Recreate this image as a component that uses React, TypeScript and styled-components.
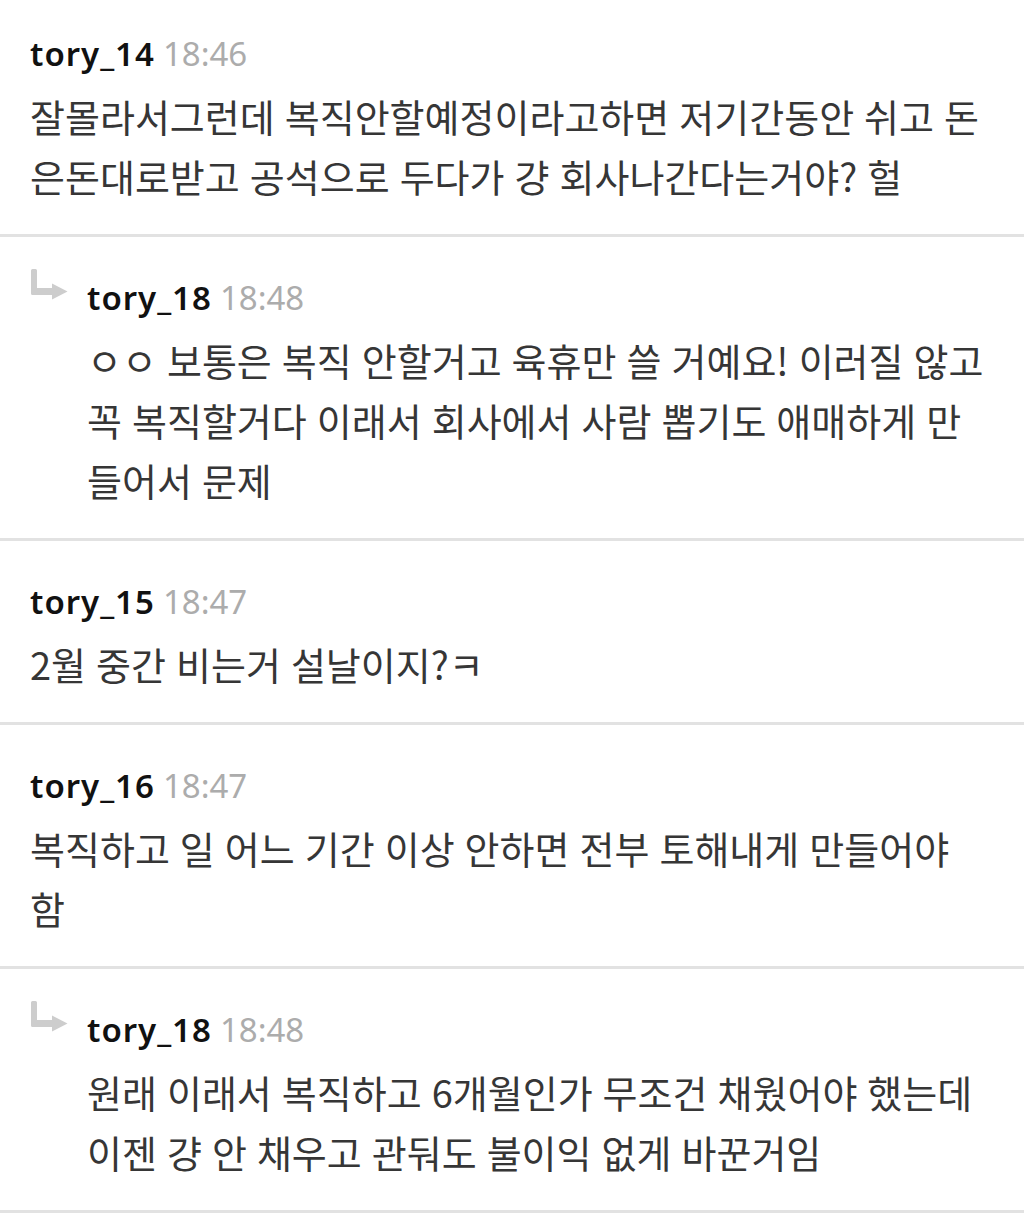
import React from "react";
import styled, { createGlobalStyle } from "styled-components";

const GlobalStyle = createGlobalStyle`
  body {
    margin: 0;
    background: #ffffff;
  }
`;

const List = styled.div`
  display: flex;
  flex-direction: column;
  margin-top: -7px;
`;

const Item = styled.div`
  display: flex;
  padding: 27px 32px 28px 30px;
  border-bottom: 3px solid #e2e2e2;
`;

const ReplyMark = styled.div`
  width: 57px;
  flex-shrink: 0;
  padding-top: 5px;
`;

const Content = styled.div`
  flex: 1;
  min-width: 0;
`;

const Header = styled.div`
  display: flex;
  align-items: center;
  height: 66px;
  font-family: "Noto Sans", "Open Sans", sans-serif;
  font-size: 33px;
`;

const Name = styled.span`
  font-weight: 600;
  color: #111111;
  letter-spacing: 1px;
`;

const Time = styled.span`
  margin-left: 8px;
  font-weight: 400;
  color: #acacac;
`;

const Body = styled.div`
  font-family: "Noto Sans CJK KR", "Noto Sans", sans-serif;
  font-size: 38px;
  line-height: 60px;
  word-spacing: 1.5px;
  color: #363636;
`;

type Comment = {
  user: string;
  time: string;
  text: string;
  reply?: boolean;
};

const comments: Comment[] = [
  {
    user: "tory_14",
    time: "18:46",
    text: "잘몰라서그런데 복직안할예정이라고하면 저기간동안 쉬고 돈은돈대로받고 공석으로 두다가 걍 회사나간다는거야? 헐",
  },
  {
    user: "tory_18",
    time: "18:48",
    text: "ㅇㅇ 보통은 복직 안할거고 육휴만 쓸 거예요! 이러질 않고 꼭 복직할거다 이래서 회사에서 사람 뽑기도 애매하게 만들어서 문제",
    reply: true,
  },
  {
    user: "tory_15",
    time: "18:47",
    text: "2월 중간 비는거 설날이지?ㅋ",
  },
  {
    user: "tory_16",
    time: "18:47",
    text: "복직하고 일 어느 기간 이상 안하면 전부 토해내게 만들어야 함",
  },
  {
    user: "tory_18",
    time: "18:48",
    text: "원래 이래서 복직하고 6개월인가 무조건 채웠어야 했는데 이젠 걍 안 채우고 관둬도 불이익 없게 바꾼거임",
    reply: true,
  },
];

function ReplyArrow() {
  return (
    <svg width="40" height="36" viewBox="0 0 40 36" fill="#cdcdcd">
      <path d="M1 1.5 Q1 0 2.5 0 L5.5 0 Q7 0 7 1.5 L7 19 L24 19 L24 26 L2.5 26 Q1 26 1 24.5 Z" />
      <path d="M22 14.5 L37.5 22.5 L22 30.5 Z" />
    </svg>
  );
}

export default function App() {
  return (
    <>
      <GlobalStyle />
      <List>
        {comments.map((c, i) => (
          <Item key={i}>
            {c.reply && (
              <ReplyMark>
                <ReplyArrow />
              </ReplyMark>
            )}
            <Content>
              <Header>
                <Name>{c.user}</Name>
                <Time>{c.time}</Time>
              </Header>
              <Body>{c.text}</Body>
            </Content>
          </Item>
        ))}
      </List>
    </>
  );
}
